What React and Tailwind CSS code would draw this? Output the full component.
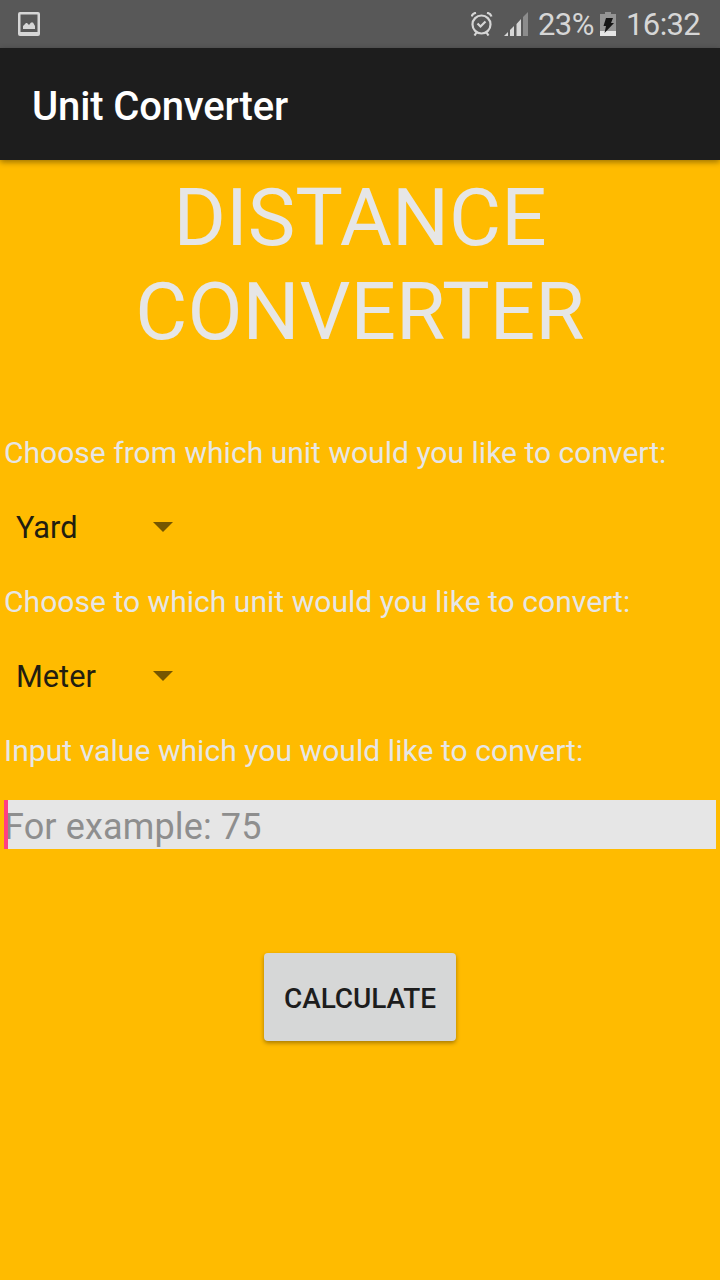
function Spinner({ value }) {
  return (
    <div className="mt-[32px] flex h-12 w-[180px] items-center justify-between pl-3 pr-[11px] text-[32px] text-[#221d10]">
      <span className="origin-left scale-x-[0.96]">{value}</span>
      <svg className="h-[10px] w-5" viewBox="0 0 20 10">
        <path d="M0 0h20L10 10z" fill="#755600" />
      </svg>
    </div>
  );
}

export default function App() {
  return (
    <div className="flex h-[1280px] w-[720px] flex-col overflow-hidden bg-[#ffbb00] font-['Roboto',sans-serif] text-[#e6e6e6]">
      <header className="flex h-12 shrink-0 items-center justify-between bg-[#585858] pl-[18px] pr-4">
        <svg className="h-6 w-[22px]" viewBox="0 0 22 24">
          <path fillRule="evenodd" d="M2 0h18a2 2 0 0 1 2 2v20a2 2 0 0 1-2 2H2a2 2 0 0 1-2-2V2a2 2 0 0 1 2-2zM2.500 2.500v17.500h17V2.500z" fill="#d6d6d6" />
          <path d="M5 17v-3l3-3h1l2 2 2-2.500h2l2 3.500v3z" fill="#d6d6d6" />
        </svg>
        <div className="flex items-center text-[31px] leading-none tracking-[-0.6px] text-[#d6d6d6]">
          <svg className="mr-[11px] h-6 w-[22px]" viewBox="0 0 22 24" fill="none" stroke="#d6d6d6" strokeWidth="2.200">
            <circle cx="10.500" cy="12.500" r="9" />
            <path d="M6.500 11.500l3 3 5-5M0.500 4.500q1-3 4.500-3.800M20.500 4.500q-1-3-4.500-3.800M5.500 20.500l-2 3M15.500 20.500l2 3" />
          </svg>
          <svg className="h-6 w-6" viewBox="0 0 24 24">
            <path d="M0 24h4v-4zM6 24h4V14l-4 4zM12.500 24h4.500V7l-4.500 5z" fill="#d6d6d6" />
            <path d="M19 24h5V0l-5 5z" fill="#8c8c8c" />
          </svg>
          <span className="ml-[10px] w-[62px]">23%</span>
          <svg className="h-6 w-4" viewBox="0 0 16 24">
            <path d="M5 0h6v2h5v17H0V2h5z" fill="#949494" />
            <path d="M0 19h16v5H0z" fill="#e6e6e6" />
            <path d="M6 6h7l-2 5h3L4.500 21l1.500-7H3.500z" fill="#151515" />
          </svg>
          <span className="ml-[10px] w-[78px]">16:32</span>
        </div>
      </header>
      <div className="z-10 flex h-28 shrink-0 items-center bg-[#1d1d1d] pl-8 pt-[5px] text-[40px] font-medium tracking-[-0.14px] text-white shadow-[0_2px_6px_rgba(0,0,0,0.4)]">Unit Converter</div>
      <main className="flex flex-col px-1">
        <h1 className="mt-[11px] text-center text-[80px] leading-[94px]">DISTANCE<br />CONVERTER</h1>
        <p className="mt-[76px] text-[30px] leading-[36px] tracking-[0.02px]">Choose from which unit would you like to convert:</p>
        <Spinner value="Yard" />
        <p className="mt-[33px] text-[30px] leading-[36px] tracking-[0.04px]">Choose to which unit would you like to convert:</p>
        <Spinner value="Meter" />
        <p className="mt-[33px] text-[30px] leading-[36px] tracking-[0.06px]">Input value which you would like to convert:</p>
        <div className="relative mt-[31px] flex h-[49px] items-center bg-[#e6e6e6] pt-1 text-[36px] tracking-[0.14px] text-[#8e8e8e]">
          For example: 75
          <span className="absolute left-0 top-0 h-[49px] w-1 bg-[#ff4081]" />
        </div>
        <button className="mt-[104px] flex h-[88px] w-48 items-center justify-center self-center rounded-[4px] bg-[#d6d7d7] pt-1 text-[28px] font-medium tracking-[-0.1px] text-[#1d1d1d] shadow-[0_2px_4px_rgba(0,0,0,0.35)]">CALCULATE</button>
      </main>
    </div>
  );
}
